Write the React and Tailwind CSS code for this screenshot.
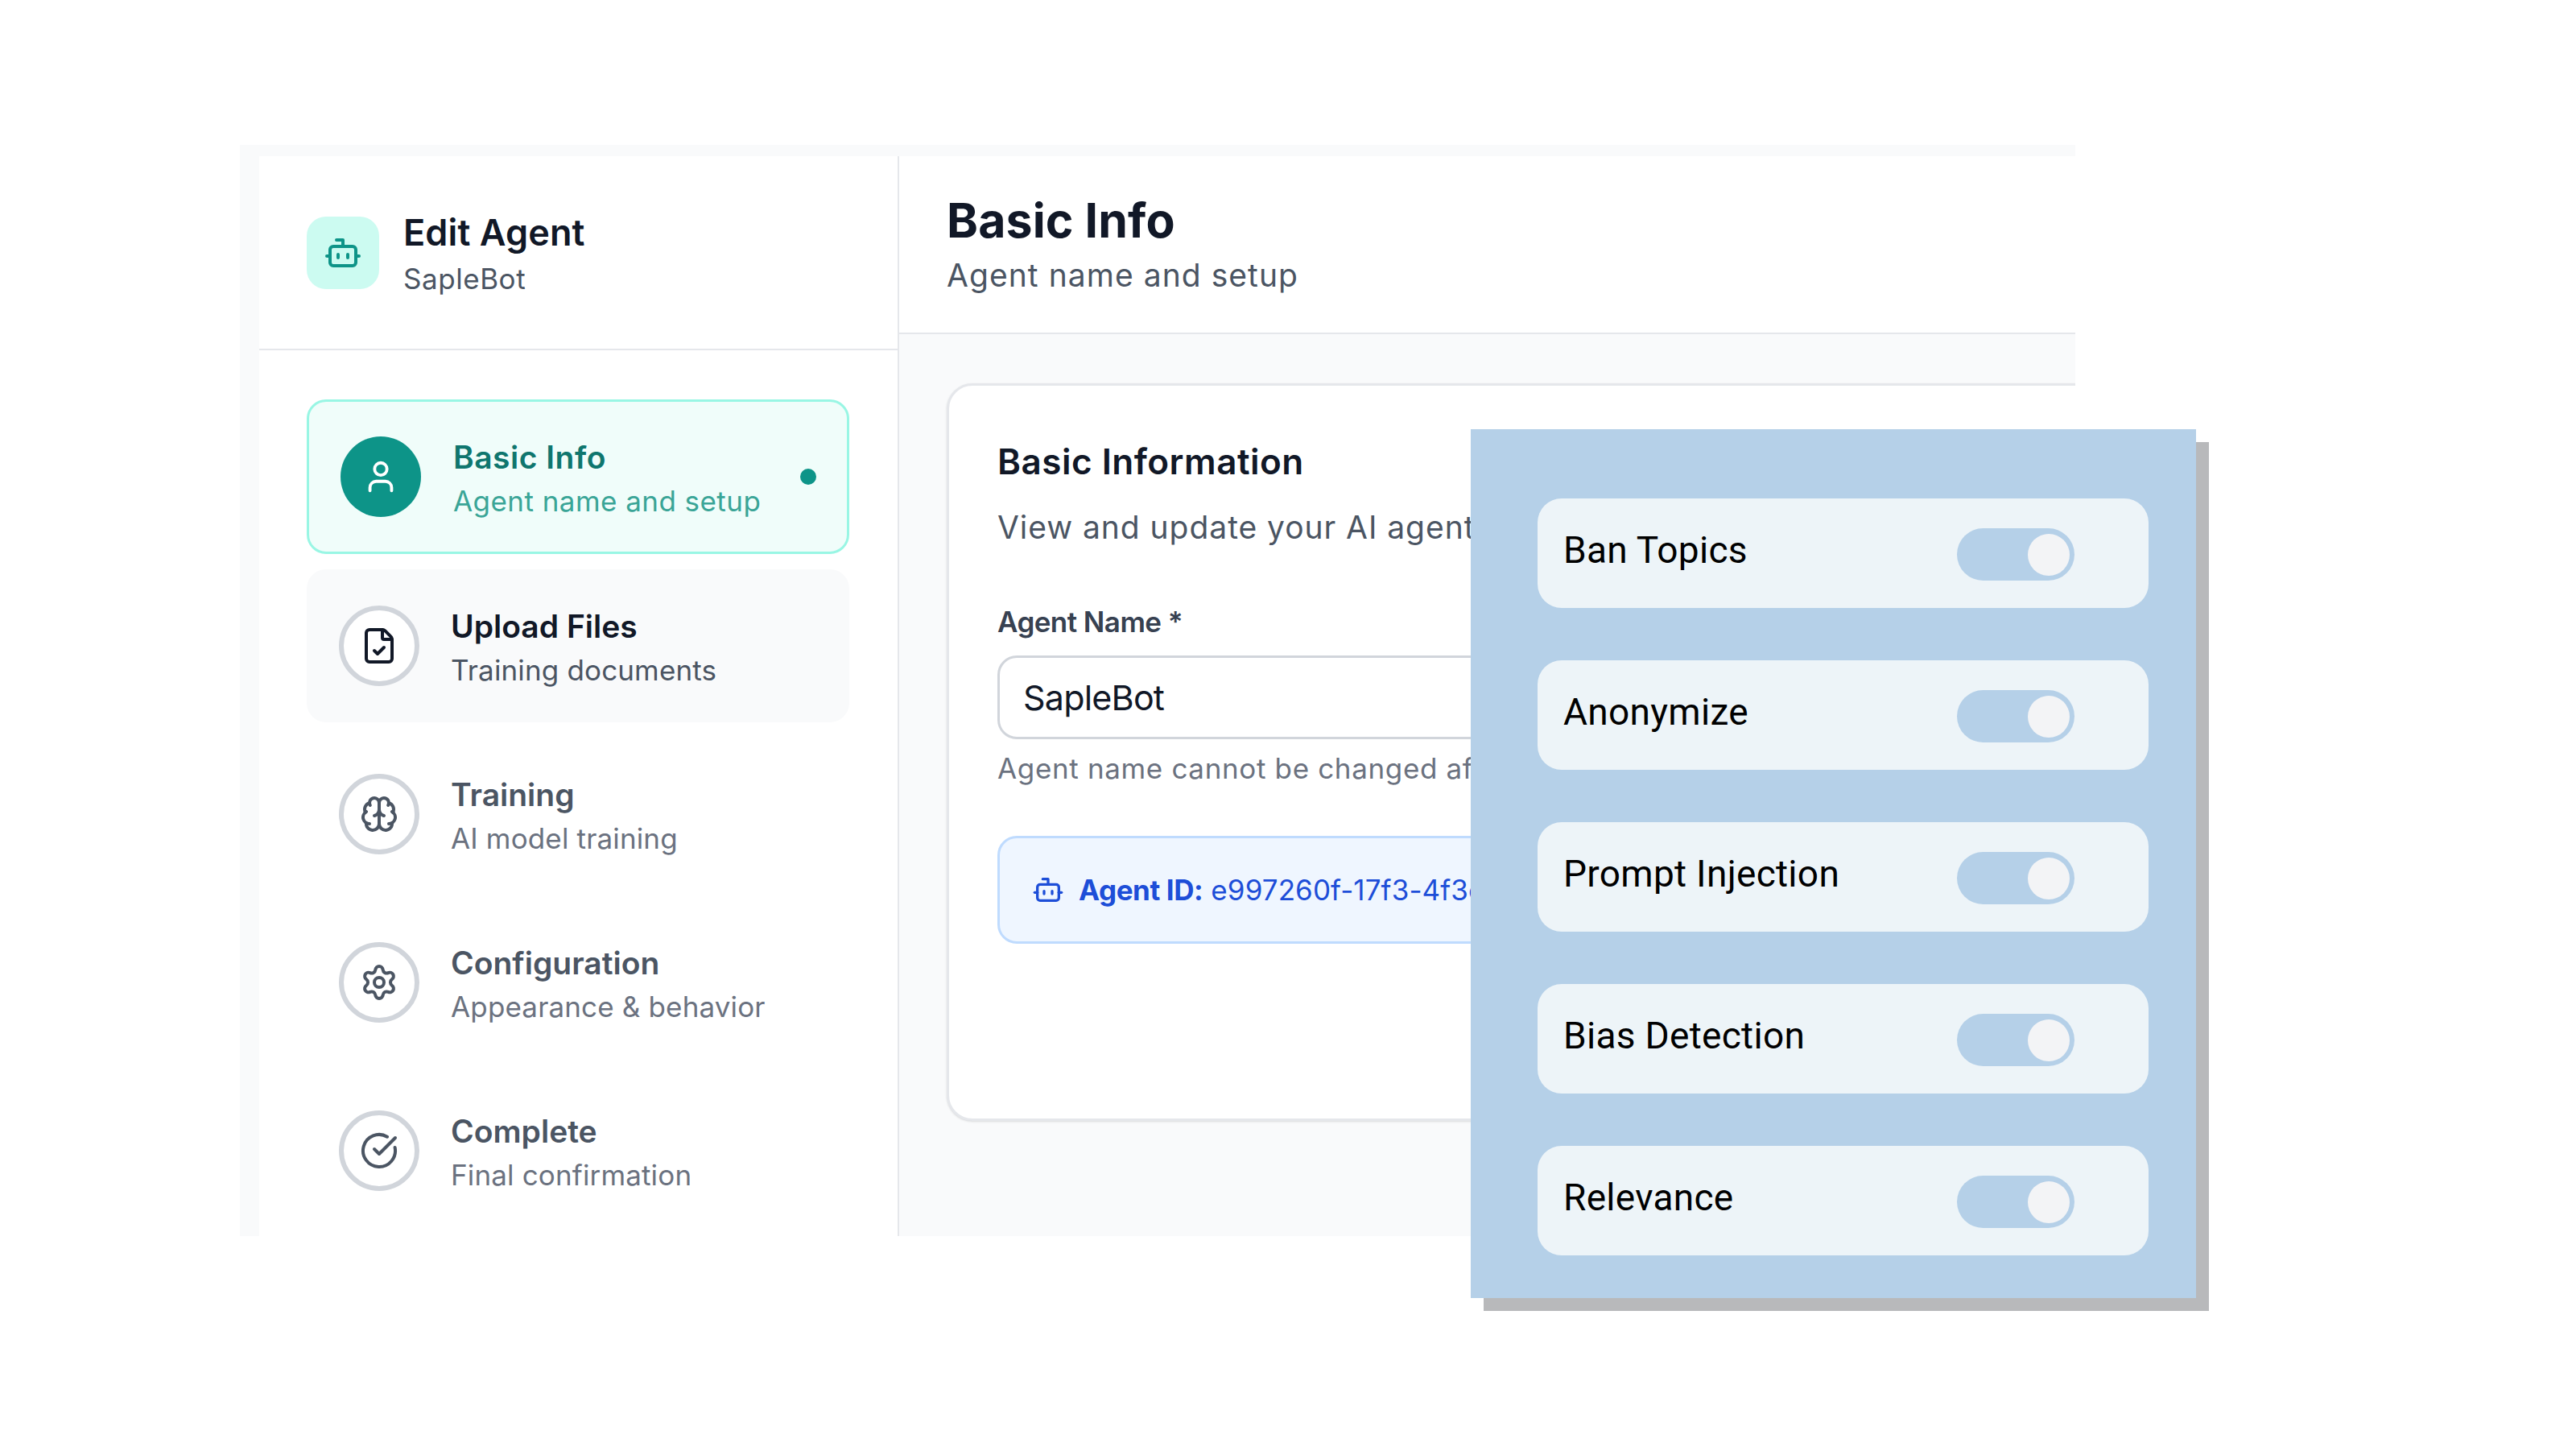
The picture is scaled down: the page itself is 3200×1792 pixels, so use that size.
import React from "react";
import { Bot, User, FileCheck, Brain, Settings, CircleCheckBig } from "lucide-react";

const steps = [
  { title: "Upload Files", sub: "Training documents", Icon: FileCheck, box: "bg-[#f9fafb]", t: "text-[#111827]", s: "text-[#4b5563]", i: "text-[#111827]" },
  { title: "Training", sub: "AI model training", Icon: Brain, box: "", t: "text-[#4b5563]", s: "text-[#6b7280]", i: "text-[#4b5563]" },
  { title: "Configuration", sub: "Appearance & behavior", Icon: Settings, box: "", t: "text-[#4b5563]", s: "text-[#6b7280]", i: "text-[#4b5563]" },
  { title: "Complete", sub: "Final confirmation", Icon: CircleCheckBig, box: "", t: "text-[#4b5563]", s: "text-[#6b7280]", i: "text-[#4b5563]" },
];

const guards = ["Ban Topics", "Anonymize", "Prompt Injection", "Bias Detection", "Relevance"];

export default function App() {
  return (
    <div className="relative w-[3200px] h-[1792px] bg-white pt-[180px] pl-[298px] font-['Inter',sans-serif]">
      <div className="flex w-[2280px] h-[1355px] overflow-hidden bg-[#f9fafb] pl-[24px] pt-[14px]">
        <aside className="w-[795px] shrink-0 bg-white border-r-[2px] border-[#e5e7eb]">
          <div className="h-[241px] flex items-center gap-[30px] pl-[59px] border-b-[2px] border-[#e5e7eb]">
            <div className="w-[90px] h-[90px] rounded-[24px] bg-[#ccfbf1] flex items-center justify-center text-[#0d9488]">
              <Bot size={48} strokeWidth={2} />
            </div>
            <div className="flex flex-col mt-[8px]">
              <span className="text-[45px] leading-[58px] font-semibold tracking-[0.1px] text-[#111827]">Edit Agent</span>
              <span className="text-[35px] leading-[57px] tracking-[0.55px] text-[#4b5563]">SapleBot</span>
            </div>
          </div>
          <nav className="flex flex-col gap-[19px] pt-[61px] pl-[59px] pr-[60px]">
            <div className="h-[192px] flex items-center rounded-[24px] bg-[#f0fdfa] border-[3px] border-[#99f6e4] pl-[39px] pr-[38px]">
              <div className="w-[100px] h-[100px] rounded-full bg-[#0d9488] flex items-center justify-center text-white shrink-0">
                <User size={46} strokeWidth={2} />
              </div>
              <div className="flex flex-col ml-[40px] flex-1 mt-[6px]">
                <span className="text-[39px] leading-[54px] font-semibold tracking-[0.5px] text-[#0f766e]">Basic Info</span>
                <span className="text-[35px] leading-[55px] tracking-[0.45px] text-[#3aa597]">Agent name and setup</span>
              </div>
              <div className="w-[20px] h-[20px] rounded-full bg-[#0d9488]" />
            </div>
            {steps.map(({ title, sub, Icon, box, t, s, i }) => (
              <div key={title} className={`h-[190px] flex items-center rounded-[24px] pl-[40px] ${box}`}>
                <div className={`w-[100px] h-[100px] rounded-full bg-white border-[6px] border-[#d1d5db] flex items-center justify-center shrink-0 ${i}`}>
                  <Icon size={48} strokeWidth={2} />
                </div>
                <div className="flex flex-col ml-[39px] mt-[6px]">
                  <span className={`text-[39px] leading-[54px] font-semibold tracking-[0px] ${t}`}>{title}</span>
                  <span className={`text-[35px] leading-[55px] tracking-[0.15px] ${s}`}>{sub}</span>
                </div>
              </div>
            ))}
          </nav>
        </aside>
        <main className="flex-1 min-w-0 flex flex-col">
          <header className="h-[221px] shrink-0 bg-white border-b-[2px] border-[#e5e7eb] pl-[59px] pt-[41px]">
            <h1 className="text-[59px] leading-[78px] font-bold tracking-[0.1px] text-[#111827]">Basic Info</h1>
            <p className="text-[39px] leading-[58px] tracking-[1.05px] text-[#4b5563]">Agent name and setup</p>
          </header>
          <div className="pl-[59px] pt-[61px]">
            <section className="w-[1600px] h-[916px] rounded-[32px] bg-white border-[3px] border-[#e5e7eb] shadow-sm pl-[60px] pt-[62px]">
              <h2 className="text-[44px] leading-[64px] font-semibold tracking-[0.5px] text-[#111827]">Basic Information</h2>
              <p className="mt-[19px] text-[39px] leading-[62px] tracking-[0.95px] text-[#4b5563] whitespace-nowrap">View and update your AI agent's basic information</p>
              <label className="block mt-[60px] text-[35px] leading-[52px] font-semibold tracking-[-0.55px] text-[#374151]">Agent Name *</label>
              <div className="mt-[16px] w-[1476px] h-[104px] rounded-[24px] border-[3px] border-[#d1d5db] bg-white flex items-center pl-[29px] text-[43px] tracking-[-0.8px] text-[#111827]">SapleBot</div>
              <p className="mt-[10px] text-[35px] leading-[52px] tracking-[0.65px] text-[#6b7280] whitespace-nowrap">Agent name cannot be changed after creation</p>
              <div className="mt-[58px] w-[1476px] h-[134px] rounded-[24px] border-[3px] border-[#bfdbfe] bg-[#eff6ff] flex items-center pl-[40px] gap-[18px] text-[#1d4ed8] text-[35px] whitespace-nowrap">
                <Bot size={40} strokeWidth={2} />
                <span className="tracking-[0.1px]"><b className="font-bold tracking-[-0.4px]">Agent ID:</b> e997260f-17f3-4f3c-9a21-7d5b8e1c0a42</span>
              </div>
            </section>
          </div>
        </main>
      </div>

      <div className="absolute left-[1827px] top-[533px] w-[901px] h-[1079px] bg-[#b5d0e8] shadow-[16px_16px_0_0_#b8b9bb] pt-[86px] pl-[83px] font-['Roboto',sans-serif]">
        <div className="flex flex-col gap-[65px] w-[759px]">
          {guards.map((g) => (
            <div key={g} className="h-[136px] rounded-[30px] bg-[#edf4f8] flex items-center pl-[32px]">
              <span className="flex-1 text-[46px] leading-[60px] tracking-[0.3px] text-black -mt-[8px]">{g}</span>
              <div className="w-[146px] h-[65px] rounded-full bg-[#b5d0e8] mr-[92px] mt-[3px] flex items-center justify-end pr-[6px]">
                <div className="w-[52px] h-[52px] rounded-full bg-[#f3f4f6]" />
              </div>
            </div>
          ))}
        </div>
      </div>
    </div>
  );
}
